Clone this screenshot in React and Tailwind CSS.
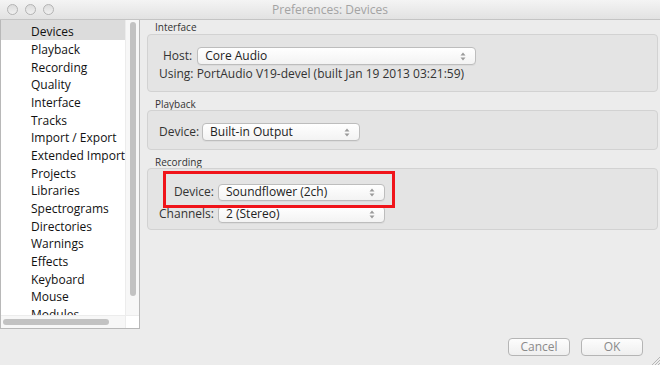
import React from "react";

const sidebarItems = [
  "Devices",
  "Playback",
  "Recording",
  "Quality",
  "Interface",
  "Tracks",
  "Import / Export",
  "Extended Import",
  "Projects",
  "Libraries",
  "Spectrograms",
  "Directories",
  "Warnings",
  "Effects",
  "Keyboard",
  "Mouse",
  "Modules",
];

const font = { fontFamily: '"Open Sans", "DejaVu Sans", sans-serif' };

// little up/down arrows of a mac popup button
const Arrows = () => (
  <svg width="6" height="9" viewBox="0 0 6 9" className="shrink-0">
    <path d="M3 0.5 L5.5 3.5 L0.5 3.5 Z" fill="#9a9a9a" />
    <path d="M3 8.5 L5.5 5.5 L0.5 5.5 Z" fill="#9a9a9a" />
  </svg>
);

const Select = ({ value, width, height = "h-[18px]" }) => (
  <div
    className={`${width} ${height} flex items-center justify-between pl-[7px] pr-[9px] rounded-[4px] border border-[#bdbdbd] bg-gradient-to-b from-[#ffffff] to-[#f3f3f3] text-[12px] text-[#222] shadow-[0_1px_0_rgba(0,0,0,0.04)]`}
  >
    <span className="leading-none">{value}</span>
    <Arrows />
  </div>
);

const GroupLabel = ({ children, className = "" }) => (
  <div className={`h-[12px] leading-[12px] pl-[8px] text-[10px] text-[#333] ${className}`}>
    {children}
  </div>
);

const Light = () => (
  <div className="w-[11px] h-[11px] rounded-full border border-[#b3b3b3] bg-gradient-to-b from-[#dcdcdc] to-[#f0f0f0]" />
);

export default function App() {
  return (
    <div className="w-[660px] h-[365px] bg-[#ececec] flex flex-col overflow-hidden" style={font}>
      {/* title bar */}
      <div className="h-[20px] shrink-0 relative flex items-center bg-gradient-to-b from-[#f4f4f4] to-[#e2e2e2] border-b border-[#c4c4c4]">
        <div className="flex gap-[7px] pl-[7px]">
          <Light />
          <Light />
          <Light />
        </div>
        <div className="absolute inset-0 flex items-center justify-center text-[12px] text-[#a3a3a3]">
          Preferences: Devices
        </div>
      </div>

      <div className="flex flex-1 min-h-0">
        {/* sidebar */}
        <div className="w-[140px] h-[309px] shrink-0 border border-t-0 border-[#b8b8b8] bg-white flex flex-col">
          <div className="flex flex-1 min-h-0">
            <div className="flex-1 overflow-hidden">
              <div className="h-[21px] pb-[1px]">
                <div className="h-[20px] pt-[2px] leading-[20px] pl-[30px] text-[12px] text-[#111] bg-[#dcdcdc]">
                  {sidebarItems[0]}
                </div>
              </div>
              {sidebarItems.slice(1).map((item) => (
                <div
                  key={item}
                  className="h-[17.67px] leading-[17.67px] pl-[30px] text-[12px] text-[#111] whitespace-nowrap"
                >
                  {item}
                </div>
              ))}
            </div>
            <div className="w-[14px] bg-[#f7f7f7] border-l border-[#ececec] flex justify-center pt-[2px]">
              <div className="w-[6px] h-[274px] rounded-full bg-[#c2c2c2]" />
            </div>
          </div>
          <div className="h-[13px] flex border-t border-[#ececec] bg-[#f7f7f7]">
            <div className="flex-1 flex items-center pl-[2px]">
              <div className="w-[106px] h-[6px] rounded-full bg-[#c2c2c2]" />
            </div>
            <div className="w-[14px] bg-white border-l border-[#ececec]" />
          </div>
        </div>

        {/* main pane */}
        <div className="flex-1 flex flex-col ml-[7px] mr-[2px] relative">
          <GroupLabel className="mt-[1px] mb-[1px]">Interface</GroupLabel>
          <div className="h-[58px] rounded-[4px] border border-[#d2d2d2] bg-[#e4e4e4] pt-[12px] pl-[11px] text-[12px] text-[#333]">
            <div className="flex items-center">
              <span className="pl-[4px] pr-[5px]">Host:</span>
              <Select value="Core Audio" width="w-[279px]" />
            </div>
            <div className="leading-[16px] mt-[1px]">
              Using: PortAudio V19-devel (built Jan 19 2013 03:21:59)
            </div>
          </div>

          <GroupLabel className="mt-[6px]">Playback</GroupLabel>
          <div className="h-[40px] rounded-[4px] border border-[#d2d2d2] bg-[#e4e4e4] pt-[12px] pl-[11px] text-[12px] text-[#333]">
            <div className="flex items-center">
              <span className="pr-[3px]">Device:</span>
              <Select value="Built-in Output" width="w-[158px]" />
            </div>
          </div>

          <GroupLabel className="mt-[6px]">Recording</GroupLabel>
          <div className="h-[62px] relative rounded-[4px] border border-[#d2d2d2] bg-[#e4e4e4] pt-[14px] pl-[10px] text-[12px] text-[#333]">
            <div className="grid grid-cols-[56px_167px] gap-x-[4px] gap-y-[4px] items-center">
              <span className="text-right">Device:</span>
              <Select value="Soundflower (2ch)" width="w-[167px]" height="h-[17px]" />
              <span className="text-right">Channels:</span>
              <Select value="2 (Stereo)" width="w-[167px]" height="h-[17px]" />
            </div>
            {/* red annotation */}
            <div className="absolute left-[15px] top-[2px] w-[232px] h-[37px] border-[3px] border-[#f0141a]" />
          </div>

          <div className="flex-1" />
          <div className="flex justify-end gap-[11px] pr-[15px] mb-[9px] text-[12px] text-[#8a8a8a]">
            <div className="w-[62px] h-[18px] rounded-[4px] border border-[#b5b5b5] bg-gradient-to-b from-[#fdfdfd] to-[#efefef] flex items-center justify-center leading-none">
              Cancel
            </div>
            <div className="w-[62px] h-[18px] rounded-[4px] border border-[#b5b5b5] bg-gradient-to-b from-[#fdfdfd] to-[#efefef] flex items-center justify-center leading-none">
              OK
            </div>
          </div>
          {/* resize grip */}
          <svg width="10" height="10" viewBox="0 0 10 10" className="absolute right-[-2px] bottom-0">
            <path d="M10 2 L2 10 M10 5 L5 10 M10 8 L8 10" stroke="#a8a8a8" strokeWidth="0.8" />
          </svg>
        </div>
      </div>
    </div>
  );
}
